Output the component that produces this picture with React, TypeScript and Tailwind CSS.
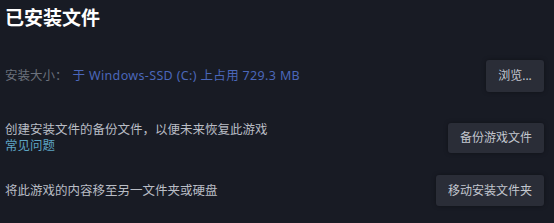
export default function App() {
  const font = "font-['Noto_Sans','Noto_Sans_CJK_SC',sans-serif]";
  const btn =
    "h-full rounded-[3px] bg-[#2a2d37] px-3 text-[12px] leading-none text-[#c3c7cf] flex items-center justify-center shadow-[0_0_4px_rgba(0,0,0,0.35)]";

  return (
    <div className={`${font} w-[554px] h-[223px] bg-[#181b24] pl-[5px] pr-[10px] pt-[6px]`}>
      <h1 className="h-[24px] text-[19px] leading-[24px] font-bold text-white">已安装文件</h1>

      <div className="mt-[30px] flex h-[32px] items-center justify-between">
        <div className="flex items-center text-[12.5px] leading-[16px]">
          <span className="text-[#6c717c]">安装大小：</span>
          <span className="ml-[5px] tracking-[0.35px] text-[#4b67b9]">于 Windows-SSD (C:) 上占用 729.3 MB</span>
        </div>
        <button className={`${btn} w-[58px] px-0`}>浏览...</button>
      </div>

      <div className="mt-[31px] flex h-[30px] items-center justify-between">
        <div className="text-[12.5px] leading-[16px]">
          <div className="text-[#b9bdc5]">创建安装文件的备份文件，以便未来恢复此游戏</div>
          <div className="text-[#5ea4c3]">常见问题</div>
        </div>
        <button className={btn}>备份游戏文件</button>
      </div>

      <div className="mt-[22px] flex h-[31px] items-center justify-between">
        <div className="text-[12.5px] leading-[16px] text-[#b9bdc5]">将此游戏的内容移至另一文件夹或硬盘</div>
        <button className={btn}>移动安装文件夹</button>
      </div>
    </div>
  );
}
